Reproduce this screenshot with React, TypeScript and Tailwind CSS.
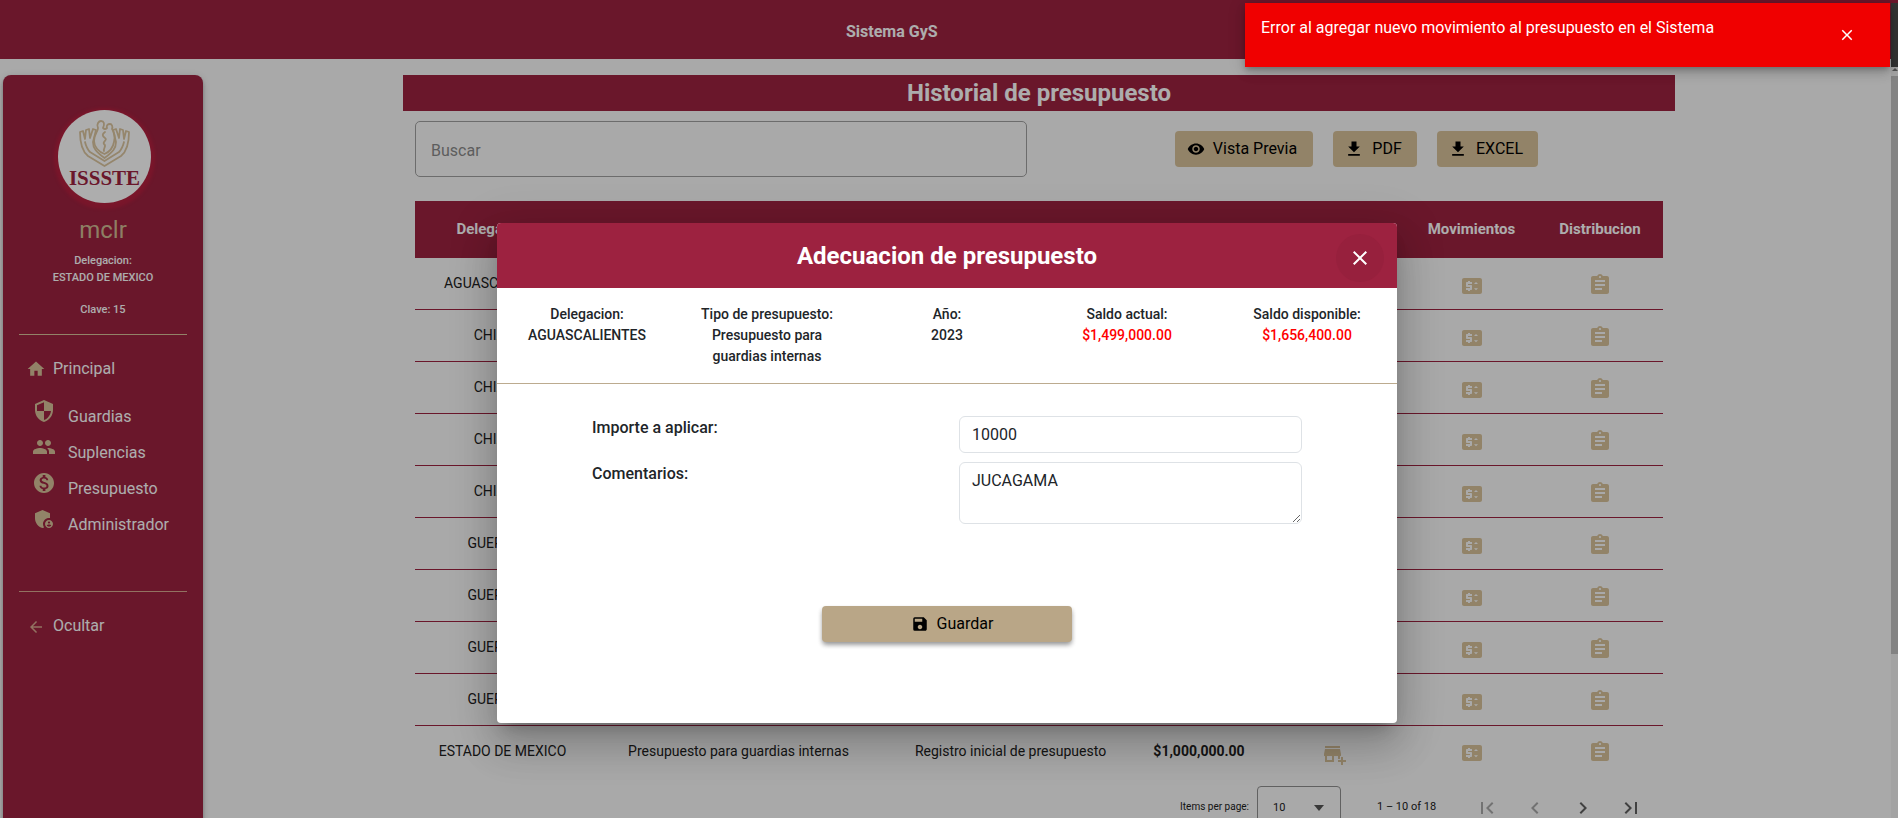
import {
  MdAddBusiness,
  MdAdminPanelSettings,
  MdArrowBack,
  MdAssignment,
  MdChevronLeft,
  MdChevronRight,
  MdClose,
  MdFileDownload,
  MdFirstPage,
  MdHome,
  MdLastPage,
  MdMonetizationOn,
  MdPeople,
  MdPriceChange,
  MdSave,
  MdSecurity,
  MdVisibility,
} from 'react-icons/md'

const rows = [
  { del: 'AGUASCALIENTES', amount: '$1,499,000.00' },
  { del: 'CHIAPAS', amount: '$1,200,000.00' },
  { del: 'CHIAPAS', amount: '$1,000,000.00' },
  { del: 'CHIAPAS', amount: '$800,000.00' },
  { del: 'CHIAPAS', amount: '$500,000.00' },
  { del: 'GUERRERO', amount: '$1,200,000.00' },
  { del: 'GUERRERO', amount: '$1,000,000.00' },
  { del: 'GUERRERO', amount: '$800,000.00' },
  { del: 'GUERRERO', amount: '$500,000.00' },
  { del: 'ESTADO DE MEXICO', amount: '$1,000,000.00' },
]

const gridCols = 'grid grid-cols-[175px_297px_247px_130px_142px_131px_126px]'

function IssteLogo() {
  return (
    <div className="ml-[3px] w-[93px] h-[93px] rounded-full bg-white shadow-[0_2px_3px_4px_#b3213f] flex flex-col items-center pt-[10px]">
      <svg width="51" height="47" viewBox="0 0 51 47" fill="none" stroke="#dcc6a0" strokeWidth="1.8" strokeLinejoin="round" strokeLinecap="round">
        <path d="M25.5 46 L9 36 C4 32 1 24 1 12 L4 11 L6 19 L7 10 L10 9 L11 18 L14 9 L17 10 L14 22 C14 28 17 32 25.5 38 C34 32 37 28 37 22 L34 10 L37 9 L40 18 L41 9 L44 10 L45 19 L47 11 L50 12 C50 24 47 32 42 36 Z" />
        <path d="M25.5 41 L11 32 C8 29 7 26 6 22 M25.5 41 L40 32 C43 29 44 26 45 22" />
        <path d="M15 21 C15 14 19 12 19 8 C17 4 20 1 22 1 C25 1 26 4 24 8 C26 10 27 9 28 8 C27 5 29 4 31 4 C33 4 34 7 33 9 C36 13 36 18 35 22 C34 28 30 32 25.5 34 C20 32 15 27 15 21 Z" />
        <path d="M26 12 C23 14 23 16 26 18 C29 20 23 22 25 24 C28 26 24 28 25 31" />
      </svg>
      <span className="font-['Liberation_Serif',serif] font-bold text-[21px] leading-[17px] mt-[3px] text-[#9d2240]">ISSSTE</span>
    </div>
  )
}

function NavItem({ icon, label }: { icon: React.ReactNode; label: string }) {
  return (
    <div className="flex items-center h-[36px] pl-[29px]">
      <span className="w-[36px] mb-[12px] text-[#d8c29a]">{icon}</span>
      <span className="text-[16px] text-white">{label}</span>
    </div>
  )
}

function Sidebar() {
  return (
    <aside className="ml-[3px] w-[200px] shrink-0 h-[800px] rounded-t-[8px] bg-[#9d2240] shadow-[0_2px_4px_-1px_rgba(0,0,0,0.2),0_4px_5px_0_rgba(0,0,0,0.14),0_1px_10px_0_rgba(0,0,0,0.12)] flex flex-col items-center pt-[35px] text-white">
      <IssteLogo />
      <div className="mt-[13px] text-[24px] leading-[29px] text-[#d0bb94]">mclr</div>
      <div className="mt-[7px] text-[11px] font-medium leading-[17px] text-center">
        <div>Delegacion:</div>
        <div>ESTADO DE MEXICO</div>
        <div className="mt-[15px]">Clave: 15</div>
      </div>
      <div className="mt-[16px] h-px w-[168px] bg-[#d8c29a]" />
      <div className="mt-[16px] w-full flex items-center h-[36px] pl-[23px]">
        <MdHome size={20} className="text-[#d8c29a] mr-[7px]" />
        <span className="text-[16px]">Principal</span>
      </div>
      <div className="mt-[12px] w-full flex flex-col">
        <NavItem icon={<MdSecurity size={24} />} label="Guardias" />
        <NavItem icon={<MdPeople size={24} />} label="Suplencias" />
        <NavItem icon={<MdMonetizationOn size={24} />} label="Presupuesto" />
        <NavItem icon={<MdAdminPanelSettings size={24} />} label="Administrador" />
      </div>
      <div className="mt-[48px] h-px w-[168px] bg-[#d8a98f]" />
      <div className="mt-[16px] w-full flex items-center h-[36px] pl-[24px]">
        <MdArrowBack size={18} className="text-[#d8a98f] mr-[8px] mt-[2px]" />
        <span className="text-[16px]">Ocultar</span>
      </div>
    </aside>
  )
}

function ActionButton({ icon, label, width }: { icon: React.ReactNode; label: string; width: string }) {
  return (
    <button className={`${width} h-[36px] pr-[4px] rounded-[4px] bg-[#d8c29a] text-black text-[16px] flex items-center justify-center gap-[8px]`}>
      {icon}
      {label}
    </button>
  )
}

function Table() {
  return (
    <div className="mt-[24px] mx-[12px] text-[14px] text-[#212121]">
      <div className={`${gridCols} h-[57px] items-center bg-[#9d2240] text-white font-bold text-[15px] text-center`}>
        <div className="pr-[17px]">Delegacion</div>
        <div>Tipo de presupuesto</div>
        <div>Tipo de movimiento</div>
        <div>Importe</div>
        <div>Adecuacion</div>
        <div>Movimientos</div>
        <div>Distribucion</div>
      </div>
      {rows.map((r, i) => (
        <div key={i} className={`${gridCols} h-[52px] items-center text-center ${i < 9 ? 'border-b border-[#9d2240]' : 'pb-[2px]'}`}>
          <div>{r.del}</div>
          <div>Presupuesto para guardias internas</div>
          <div>Registro inicial de presupuesto</div>
          <div className="font-bold">{r.amount}</div>
          <div className="flex justify-center pt-[6px]">
            <MdAddBusiness size={24} className="text-[#d8c29a]" />
          </div>
          <div className="flex justify-center pt-[4px]">
            <MdPriceChange size={24} className="text-[#d8c29a]" />
          </div>
          <div className="flex justify-center pt-[2px]">
            <MdAssignment size={24} className="text-[#d8c29a]" />
          </div>
        </div>
      ))}
      <div className="flex justify-end items-start pt-[8px] pr-[8px]">
        <span className="mt-[14px] text-[10px] leading-[14px] text-[#212121] whitespace-nowrap">Items per page:</span>
        <div className="ml-[8px] w-[84px] h-[56px] rounded-[4px] border border-[#8f8f8f] flex justify-between pt-[14px] pl-[15px] pr-[16px] text-[11px] leading-[14px]">
          <span>10</span>
          <span className="mt-[4px] w-0 h-0 border-x-[5px] border-x-transparent border-t-[6px] border-t-[#555]" />
        </div>
        <span className="ml-[36px] mt-[14px] text-[11px] leading-[14px] text-[#212121] w-[58px] whitespace-nowrap">1 – 10 of 18</span>
        <div className="ml-[28px] flex text-[#616161] mt-[2px]">
          <span className="w-[48px] h-[40px] flex items-center justify-center"><MdFirstPage size={24} className="text-[#a8a8a8]" /></span>
          <span className="w-[48px] h-[40px] flex items-center justify-center"><MdChevronLeft size={24} className="text-[#a8a8a8]" /></span>
          <span className="w-[48px] h-[40px] flex items-center justify-center"><MdChevronRight size={24} /></span>
          <span className="w-[48px] h-[40px] flex items-center justify-center"><MdLastPage size={24} /></span>
        </div>
      </div>
    </div>
  )
}

function InfoCol({ title, children }: { title: string; children: React.ReactNode }) {
  return (
    <div className="w-[180px] text-center">
      <div>{title}</div>
      {children}
    </div>
  )
}

function Modal() {
  return (
    <div className="absolute left-[497px] top-[223px] w-[900px] h-[500px] rounded-[4px] bg-white overflow-hidden text-[#212529] shadow-[0_11px_15px_-7px_rgba(0,0,0,0.2),0_24px_38px_3px_rgba(0,0,0,0.14),0_9px_46px_8px_rgba(0,0,0,0.12)]">
      <div className="relative h-[65px] bg-[#9d2240] flex items-center justify-center">
        <h2 className="text-[24px] font-bold text-white">Adecuacion de presupuesto</h2>
        <button className="absolute left-[839px] top-[11px] w-[48px] h-[48px] rounded-full bg-[#97203d] flex items-center justify-center text-white">
          <MdClose size={24} />
        </button>
      </div>
      <div className="h-[96px] border-b border-[#bcab8f] flex pt-[16px] text-[14px] leading-[21px] font-medium">
        <InfoCol title="Delegacion:">
          <div>AGUASCALIENTES</div>
        </InfoCol>
        <InfoCol title="Tipo de presupuesto:">
          <div className="px-[30px]">Presupuesto para guardias internas</div>
        </InfoCol>
        <InfoCol title="Año:">
          <div>2023</div>
        </InfoCol>
        <InfoCol title="Saldo actual:">
          <div className="text-[#ff0000]">$1,499,000.00</div>
        </InfoCol>
        <InfoCol title="Saldo disponible:">
          <div className="text-[#ff0000]">$1,656,400.00</div>
        </InfoCol>
      </div>
      <div className="pt-[32px] pl-[95px] flex flex-col text-[16px]">
        <div className="flex items-start">
          <label className="w-[367px] font-medium leading-[24px]">Importe a aplicar:</label>
          <input
            readOnly
            value="10000"
            className="w-[343px] h-[37px] px-[12px] rounded-[6px] border border-[#dee2e6] outline-none text-[#212529]"
          />
        </div>
        <div className="flex items-start mt-[9px]">
          <label className="w-[367px] font-medium leading-[24px]">Comentarios:</label>
          <textarea
            readOnly
            defaultValue="JUCAGAMA"
            className="w-[343px] h-[62px] px-[12px] py-[6px] rounded-[6px] border border-[#dee2e6] outline-none text-[#212529]"
          />
        </div>
      </div>
      <div className="flex justify-center mt-[82px]">
        <button className="w-[250px] h-[36px] pl-[10px] rounded-[4px] bg-[#b9a687] text-black text-[16px] flex items-center justify-center gap-[8px] shadow-[0_3px_5px_-1px_rgba(0,0,0,0.3),0_3px_5px_0_rgba(0,0,0,0.2)]">
          <MdSave size={18} />
          Guardar
        </button>
      </div>
    </div>
  )
}

export default function App() {
  return (
    <div className="relative h-screen w-full overflow-hidden bg-[#fafafa] font-['Roboto',sans-serif]">
      <header className="h-[59px] bg-[#9d2240] flex items-center pl-[846px] pt-[4px] text-[16px] font-bold text-white">
        Sistema GyS
      </header>

      <div className="flex pt-[16px]">
        <Sidebar />
        <main className="ml-[200px] w-[1272px] shrink-0">
          <div className="h-[36px] bg-[#9d2240] flex items-center justify-center text-[24px] font-bold text-white">
            Historial de presupuesto
          </div>
          <div className="mt-[10px] ml-[12px] flex items-start">
            <div className="w-[612px] h-[56px] rounded-[5px] border border-[#a0a0a0] flex items-center px-[15px] pt-[4px] text-[16px] text-[#8a8a8a]">
              Buscar
            </div>
            <div className="ml-[148px] mt-[10px] flex gap-[20px]">
              <ActionButton icon={<MdVisibility size={18} />} label="Vista Previa" width="w-[138px]" />
              <ActionButton icon={<MdFileDownload size={20} />} label="PDF" width="w-[84px]" />
              <ActionButton icon={<MdFileDownload size={20} />} label="EXCEL" width="w-[101px]" />
            </div>
          </div>
          <Table />
        </main>
      </div>

      {/* scrollbar */}
      <div className="absolute right-0 top-[3px] bottom-0 w-[7px] flex flex-col bg-[#f1f1f1]">
        <div className="h-[64px] bg-[#4c4c4c]" />
        <div className="h-[9px] flex justify-center pt-[1px]">
          <span className="w-0 h-0 border-x-[3px] border-x-transparent border-b-[3px] border-b-[#777]" />
        </div>
        <div className="h-[578px] bg-[#c2c2c2]" />
      </div>

      {/* backdrop */}
      <div className="absolute inset-0 bg-black/[0.32]" />

      <Modal />

      {/* snackbar */}
      <div className="absolute top-[3px] right-[8px] w-[645px] h-[64px] bg-[#f00000] text-white text-[16px] leading-[20px] pl-[16px] pt-[15px] shadow-[0_3px_5px_-1px_rgba(0,0,0,0.2),0_6px_10px_0_rgba(0,0,0,0.14),0_1px_18px_0_rgba(0,0,0,0.12)]">
        Error al agregar nuevo movimiento al presupuesto en el Sistema
        <MdClose size={18} className="absolute left-[593px] top-[23px]" />
      </div>
    </div>
  )
}
